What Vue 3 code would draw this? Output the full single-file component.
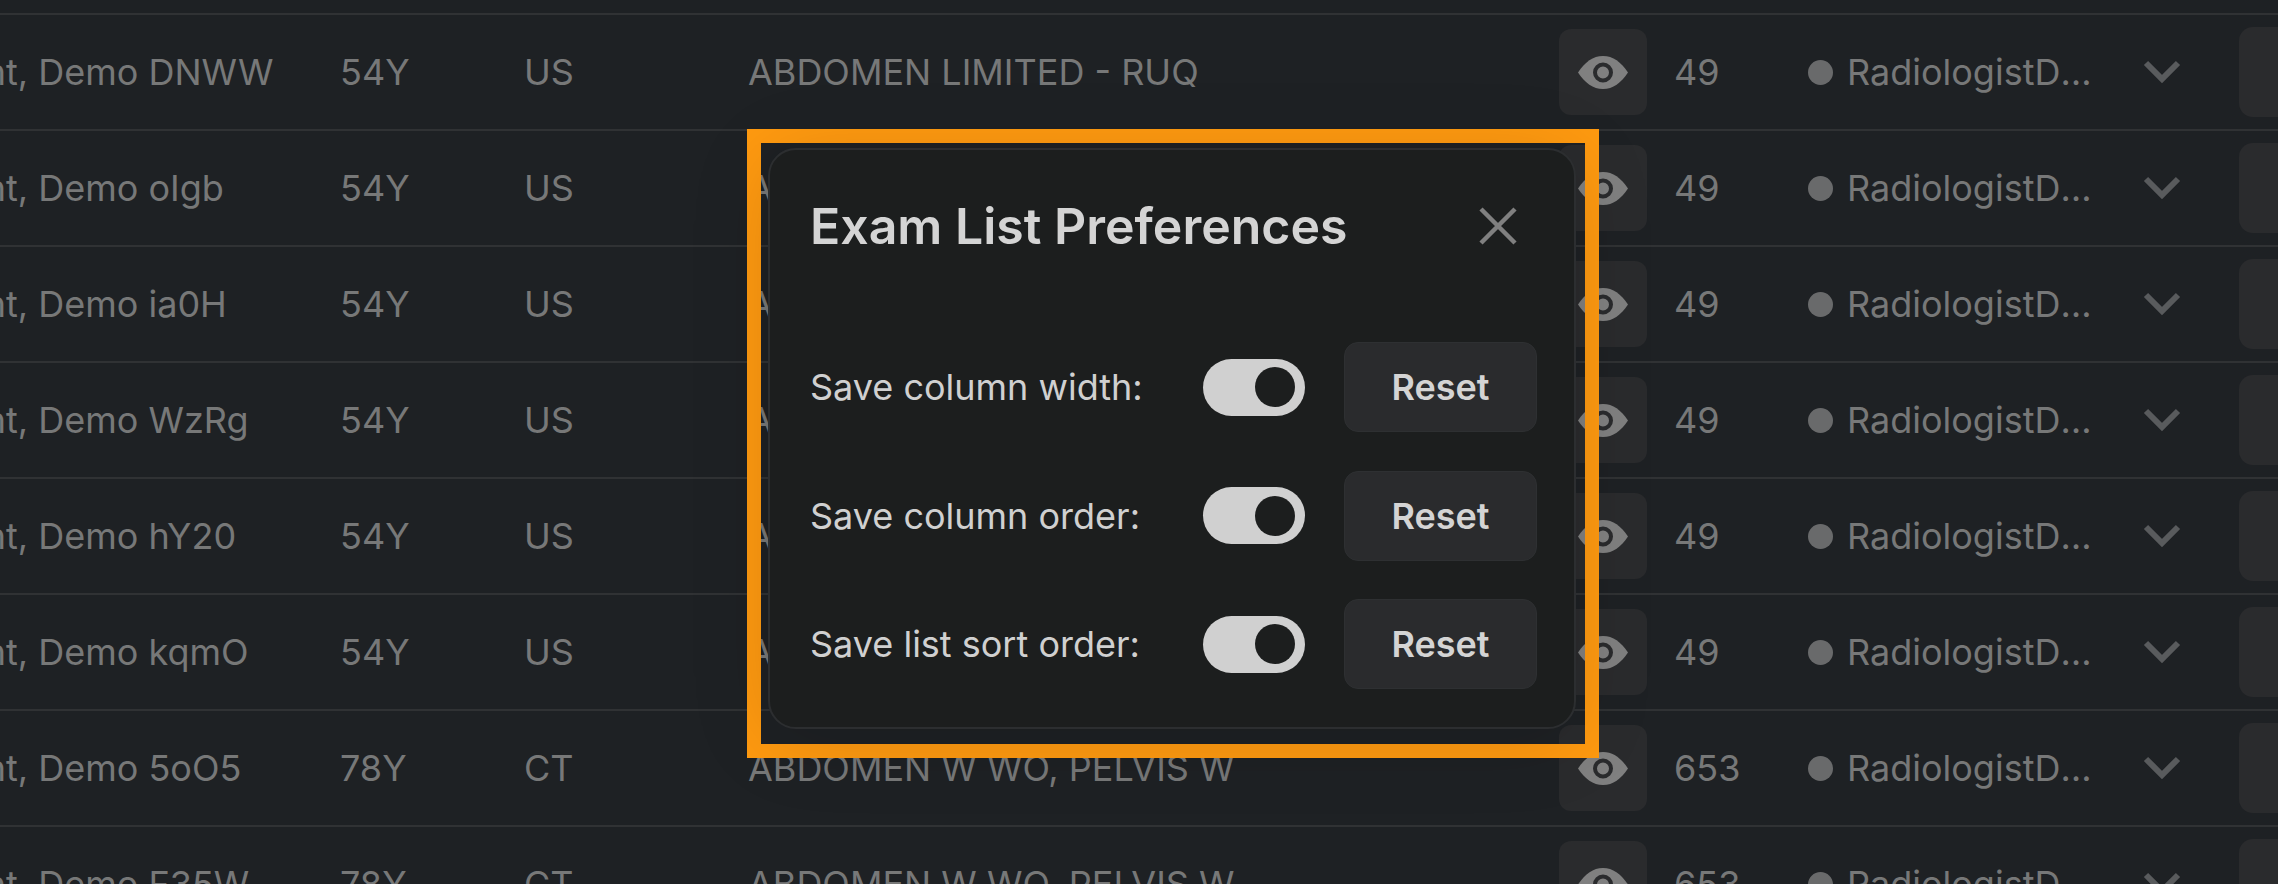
<script setup>
const exams = [
  { id: 'DNWW', age: '54Y', mod: 'US', exam: 'ABDOMEN LIMITED - RUQ', count: 49 },
  { id: 'oIgb', age: '54Y', mod: 'US', exam: 'ABDOMEN LIMITED - RUQ', count: 49 },
  { id: 'ia0H', age: '54Y', mod: 'US', exam: 'ABDOMEN LIMITED - RUQ', count: 49 },
  { id: 'WzRg', age: '54Y', mod: 'US', exam: 'ABDOMEN LIMITED - RUQ', count: 49 },
  { id: 'hY20', age: '54Y', mod: 'US', exam: 'ABDOMEN LIMITED - RUQ', count: 49 },
  { id: 'kqmO', age: '54Y', mod: 'US', exam: 'ABDOMEN LIMITED - RUQ', count: 49 },
  { id: '5oO5', age: '78Y', mod: 'CT', exam: 'ABDOMEN W WO, PELVIS W', count: 653 },
  { id: 'F35W', age: '78Y', mod: 'CT', exam: 'ABDOMEN W WO, PELVIS W', count: 653 },
]

const prefs = ['Save column width:', 'Save column order:', 'Save list sort order:']
</script>

<template>
  <div class="page">
    <div class="table">
      <div class="row" v-for="item in exams" :key="item.id">
        <div class="name">Patient, Demo {{ item.id }}</div>
        <div>{{ item.age }}</div>
        <div>{{ item.mod }}</div>
        <div>{{ item.exam }}</div>
        <div class="eye-btn">
          <svg width="50" height="33" viewBox="0 0 50 33">
            <path d="M0 16.5C7 6 15 0 25 0s18 6 25 16.5C43 27 35 33 25 33S7 27 0 16.5Z" fill="#808080" />
            <circle cx="25" cy="16.5" r="8" fill="#808080" stroke="#2a2b2d" stroke-width="4" />
          </svg>
        </div>
        <div>{{ item.count }}</div>
        <div class="status">
          <span class="dot"></span>
          <span class="status-text">RadiologistDemo</span>
        </div>
        <svg class="chevron" width="38" height="24" viewBox="0 0 38 24">
          <path d="M3 3l16 16L35 3" fill="none" stroke="#595b5d" stroke-width="6" />
        </svg>
        <div class="next-btn"></div>
      </div>
    </div>

    <div class="frame">
      <div class="modal">
        <div class="modal-head">
          <h2>Exam List Preferences</h2>
          <svg class="close" width="38" height="38" viewBox="0 0 38 38">
            <path d="M2 2l34 34M36 2L2 36" fill="none" stroke="#808080" stroke-width="4.5" />
          </svg>
        </div>
        <div class="prefs">
          <template v-for="label in prefs" :key="label">
            <span class="pref-label">{{ label }}</span>
            <span class="toggle"><span class="knob"></span></span>
            <button class="reset">Reset</button>
          </template>
        </div>
      </div>
    </div>
  </div>
</template>

<style scoped>
.page {
  position: relative;
  width: 2278px;
  height: 884px;
  overflow: hidden;
  background: #1e2124;
  font-family: Inter, "Liberation Sans", sans-serif;
  font-size: 36px;
  color: #777878;
}

.table {
  margin: 13px 0 0 -100px;
  border-top: 2px solid #303234;
}

.row {
  display: grid;
  grid-template-columns: 440px 184px 224px 811px 115px 134px 335px 96px 90px;
  align-items: center;
  height: 116px;
  box-sizing: border-box;
  border-bottom: 2px solid #303234;
  white-space: nowrap;
}

.eye-btn {
  display: flex;
  align-items: center;
  justify-content: center;
  width: 88px;
  height: 86px;
  border-radius: 12px;
  background: #2a2b2d;
}

.status {
  display: flex;
  align-items: center;
  gap: 14px;
}

.dot {
  width: 25px;
  height: 25px;
  border-radius: 50%;
  background: #696a6b;
  flex: none;
}

.status-text {
  width: 260px;
  overflow: hidden;
  text-overflow: ellipsis;
}

.next-btn {
  height: 90px;
  border-radius: 14px 0 0 14px;
  background: #2a2b2d;
}

.frame {
  position: absolute;
  left: 747px;
  top: 129px;
  width: 852px;
  height: 629px;
  box-sizing: border-box;
  border: 14px solid #ff9a10;
  padding: 5px 9px 15px 7px;
  display: flex;
}

.modal {
  flex: 1;
  box-sizing: border-box;
  padding: 40px 37px 38px 40px;
  background: #1c1e1e;
  border: 2px solid #2c2e30;
  border-radius: 28px;
  box-shadow: 0 10px 80px rgba(0, 0, 0, 0.15);
}

.modal-head {
  display: flex;
  align-items: center;
  justify-content: space-between;
  height: 72px;
  margin-bottom: 80px;
  padding-right: 20px;
}

h2 {
  margin: 0;
  font-size: 50px;
  font-weight: 600;
  color: #d4d4d4;
}

.prefs {
  display: grid;
  grid-template-columns: 1fr 102px 193px;
  column-gap: 39px;
  row-gap: 38.5px;
  align-items: center;
}

.pref-label {
  color: #d0d0d0;
  white-space: nowrap;
}

.toggle {
  display: flex;
  align-items: center;
  justify-content: flex-end;
  box-sizing: border-box;
  height: 57px;
  padding-right: 10px;
  border-radius: 29px;
  background: #d0d0d0;
}

.knob {
  width: 40px;
  height: 40px;
  border-radius: 50%;
  background: #1c1e1e;
}

.reset {
  height: 90px;
  border: 1px solid #2e3032;
  border-radius: 14px;
  background: #2a2b2d;
  font: 600 36px Inter, "Liberation Sans", sans-serif;
  color: #d4d4d4;
}
</style>

<style>
body {
  background: #1e2124;
}
</style>
